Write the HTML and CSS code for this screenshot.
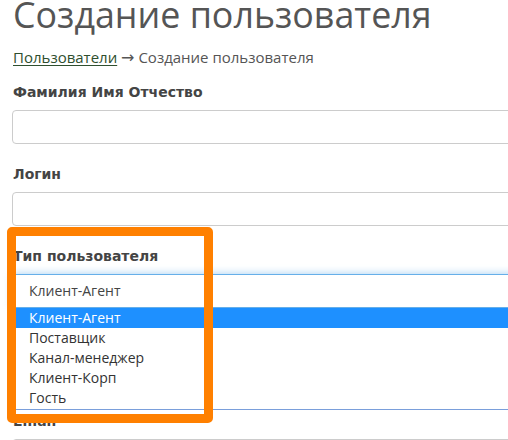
FILE: index.html
```html
<!DOCTYPE html>
<html lang="ru">
<head>
<meta charset="utf-8">
<title>Создание пользователя</title>
<link rel="stylesheet" href="styles.css">
</head>
<body>
<div class="page">
  <h1 class="title">Создание пользователя</h1>
  <div class="crumbs"><a class="crumb-link" href="#">Пользователи</a> <span class="arrow">→</span> Создание пользователя</div>
  <form class="form">
    <div class="group">
      <label class="label">Фамилия Имя Отчество</label>
      <div class="input"></div>
    </div>
    <div class="group">
      <label class="label">Логин</label>
      <div class="input"></div>
    </div>
    <div class="group group-select">
      <label class="label">Тип пользователя</label>
      <div class="select">Клиент-Агент</div>
      <ul class="options">
        <li class="option active">Клиент-Агент</li>
        <li class="option">Поставщик</li>
        <li class="option">Канал-менеджер</li>
        <li class="option">Клиент-Корп</li>
        <li class="option">Гость</li>
      </ul>
    </div>
    <div class="group">
      <label class="label">Email</label>
      <div class="input"></div>
    </div>
  </form>
  <div class="highlight"></div>
</div>
</body>
</html>
```
FILE: styles.css
```css
html, body {
  margin: 0;
  padding: 0;
  background: #fff;
  overflow: hidden;
}
body {
  font-family: "Open Sans", "Liberation Sans", sans-serif;
  color: #555;
}
.page {
  position: relative;
  width: 660px;
  padding-left: 12px;
  height: 440px;
  overflow: hidden;
}
.title {
  margin: -6px 0 0 1px;
  font-size: 35.8px;
  line-height: 40px;
  font-weight: 400;
  color: #555;
  white-space: nowrap;
}
.crumbs {
  margin-top: 13px;
  margin-left: 1px;
  font-size: 15px;
  line-height: 20px;
  color: #555;
}
.arrow {
  font-family: "DejaVu Sans", sans-serif;
  font-size: 16px;
}
.crumb-link {
  color: #2f4f2f;
  text-decoration: underline;
  text-underline-offset: 2px;
}
.form {
  margin: 14px 0 0 0;
}
.group {
  margin-bottom: 20px;
}
.group-select {
  margin-bottom: 1px;
}
.label {
  display: block;
  margin: 0 0 8px 1px;
  font-family: "DejaVu Sans", "Open Sans", sans-serif;
  font-size: 14px;
  line-height: 20px;
  font-weight: 700;
  color: #444;
}
.input {
  box-sizing: border-box;
  height: 34px;
  border: 1px solid #ccc;
  border-radius: 4px;
  background: #fff;
}
.select {
  box-sizing: border-box;
  height: 34px;
  border: 1px solid #66afe9;
  border-radius: 4px;
  box-shadow: 0 0 8px rgba(102, 175, 233, 0.6);
  padding-left: 16px;
  font-size: 14px;
  line-height: 32px;
  color: #444;
  background: #fff;
}
.options {
  list-style: none;
  margin: 0;
  padding: 0 0 1px 0;
  border-bottom: 1px solid #7a9fdb;
  background: #fff;
  position: relative;
}
.option {
  height: 20px;
  line-height: 20px;
  padding-left: 17px;
  font-size: 14px;
  color: #333;
}
.option.active {
  background: #1e90ff;
  color: #fff;
}
.highlight {
  position: absolute;
  left: 7px;
  top: 227px;
  width: 206px;
  height: 196px;
  box-sizing: border-box;
  border: 9px solid #ff8000;
  border-radius: 5px;
}
```
